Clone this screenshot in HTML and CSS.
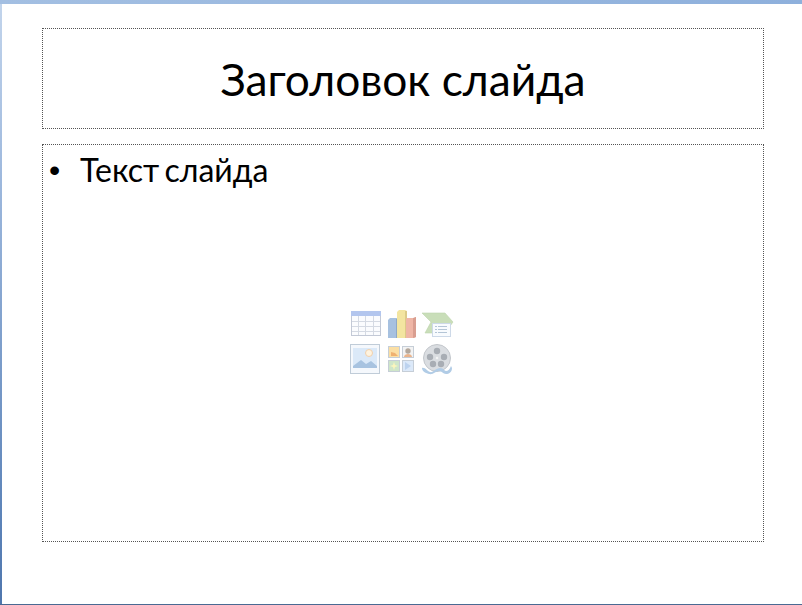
FILE: index.html
```html
<!DOCTYPE html>
<html lang="ru">
<head>
<meta charset="utf-8">
<title>Слайд</title>
<link rel="stylesheet" href="styles.css">
</head>
<body>
<div class="window">
  <main class="slide">
    <h1 class="title">Заголовок слайда</h1>
    <section class="content">
      <ul class="bullets"><li class="bullet">Текст слайда</li></ul>
      <div class="icons">
        <svg class="icon-art" width="106" height="70" viewBox="0 0 106 70" aria-hidden="true">
          <!-- table -->
          <rect x="1.500" y="3.500" width="29" height="24" fill="#fbfcfe" stroke="#c3c9d6"/>
          <rect x="1" y="3" width="30" height="5" fill="#b3c6ee"/>
          <path d="M2 13.500h28M2 18.500h28M2 23.500h28M8.500 8v19M15.500 8v19M23.500 8v19" stroke="#d5dae3" fill="none"/>
          <!-- bars -->
          <path d="M38 12l2-2h7l2 1v19H38z" fill="#a7c1e0"/>
          <path d="M46 11h3v19h-3z" fill="#8fa8c6"/>
          <path d="M47 4l2-2h6l2 1v27H47z" fill="#f3e5a0"/>
          <path d="M55 3h2v27h-2z" fill="#dccb88"/>
          <path d="M56 11l1-1h7l2-1v20l-2 1h-8z" fill="#efb6a6"/>
          <path d="M63 10l3-1v20l-3 1z" fill="#d99e90"/>
          <!-- arrow with list -->
          <path d="M72 5h23l8 9-8 11H75l6-11z" fill="#c9deb9" stroke="#bdd3ac" stroke-width=".6"/>
          <rect x="82.500" y="15.500" width="18" height="13" fill="#f8fbfe" stroke="#cdd9e8"/>
          <path d="M85 18.500h2M88 18.500h9M85 21.500h2M88 21.500h9M85 24.500h2M88 24.500h9" stroke="#b4c5d6" fill="none"/>
          <!-- picture -->
          <rect x="0.500" y="36.500" width="29" height="29" fill="#f5f8fc" stroke="#c0ccd8"/>
          <rect x="3" y="40" width="24" height="20" fill="#dbe9f8"/>
          <circle cx="19" cy="45" r="3.500" fill="#fff3de" stroke="#f0d0ac"/>
          <path d="M3 58l8-6 5 4 5-3 6 5v2H3z" fill="#a8c3e0"/>
          <!-- clip art tiles -->
          <rect x="38.500" y="38.500" width="11" height="11" fill="#fbdfa4" stroke="#c6ced7"/>
          <path d="M41 44l4 1 3 3h-7z" fill="#efb170"/>
          <rect x="52.500" y="38.500" width="11" height="11" fill="#f3f3f3" stroke="#c6ced7"/>
          <circle cx="58" cy="43" r="2.700" fill="#b4a89c"/>
          <path d="M54 49c0-4 8-4 8 0z" fill="#eab48c"/>
          <rect x="38.500" y="52.500" width="11" height="11" fill="#cfe6c9" stroke="#c6ced7"/>
          <path d="M44 54l1 3 3 1-3 1-1 3-1-3-3-1 3-1z" fill="#fbf6bd"/>
          <rect x="52.500" y="52.500" width="11" height="11" fill="#dce9f9" stroke="#c6ced7"/>
          <path d="M55 54l6 4-6 4z" fill="#bdd3ef"/>
          <!-- film reel -->
          <circle cx="87" cy="50" r="13.500" fill="#dadde1" stroke="#c2c6cb"/>
          <circle cx="87" cy="43" r="3.200" fill="#a8adb4"/>
          <circle cx="80" cy="49" r="3.200" fill="#a8adb4"/>
          <circle cx="94" cy="49" r="3.200" fill="#a8adb4"/>
          <circle cx="83" cy="56" r="3.200" fill="#a8adb4"/>
          <circle cx="91" cy="56" r="3.200" fill="#a8adb4"/>
          <circle cx="87" cy="50" r="1.300" fill="#f2f3f4"/>
          <path d="M72 60c3-1 5 3 8 4s6-4 10-4 4 3 6 3 4-2 5-5l1 2c0 4-3 6-6 6s-4-3-7-3-6 4-10 3-7-3-7-6z" fill="#b1cce6"/>
        </svg>
      </div>
    </section>
  </main>
</div>
</body>
</html>
```
FILE: styles.css
```css
html, body {
  margin: 0;
  padding: 0;
  background: #fff;
}
.window {
  width: 802px;
  height: 605px;
  box-sizing: border-box;
  padding: 4px 0 1px 2px;
  background:
    linear-gradient(#4a6a93, #4a6a93) left bottom / 100% 1px no-repeat,
    linear-gradient(90deg, #a3bfe2, #8eb0dc) top / 100% 4px no-repeat,
    linear-gradient(#c3d5ec, #9db8dd 30%, #5d84b9 85%, #4f76ad);
}
.slide {
  height: 600px;
  box-sizing: border-box;
  background: #fff;
  padding: 24px 38px 62px 40px;
  display: flex;
  flex-direction: column;
  gap: 15px;
  font-family: "Lato", "Open Sans", sans-serif;
  color: #000;
}
.title {
  margin: 0;
  height: 101px;
  box-sizing: border-box;
  border: 1px dotted #555;
  display: flex;
  align-items: center;
  justify-content: center;
  font-weight: 400;
  font-size: 44.300px;
}
.content {
  position: relative;
  flex: 1;
  border: 1px dotted #555;
  padding: 6px 0 0 6px;
}
.bullets {
  margin: 0;
  padding: 0;
  list-style: none;
  font-size: 32px;
  line-height: 38px;
  word-spacing: -3px;
}
.bullet {
  display: flex;
  gap: 23px;
}
.bullet::before {
  content: "•";
  font-family: "Liberation Sans", sans-serif;
  width: 8px;
  font-size: 32px;
}
.icons {
  position: absolute;
  inset: 0;
  display: flex;
  align-items: center;
  justify-content: center;
}
.icon-art {
  display: block;
  filter: blur(0.25px);
}
```
